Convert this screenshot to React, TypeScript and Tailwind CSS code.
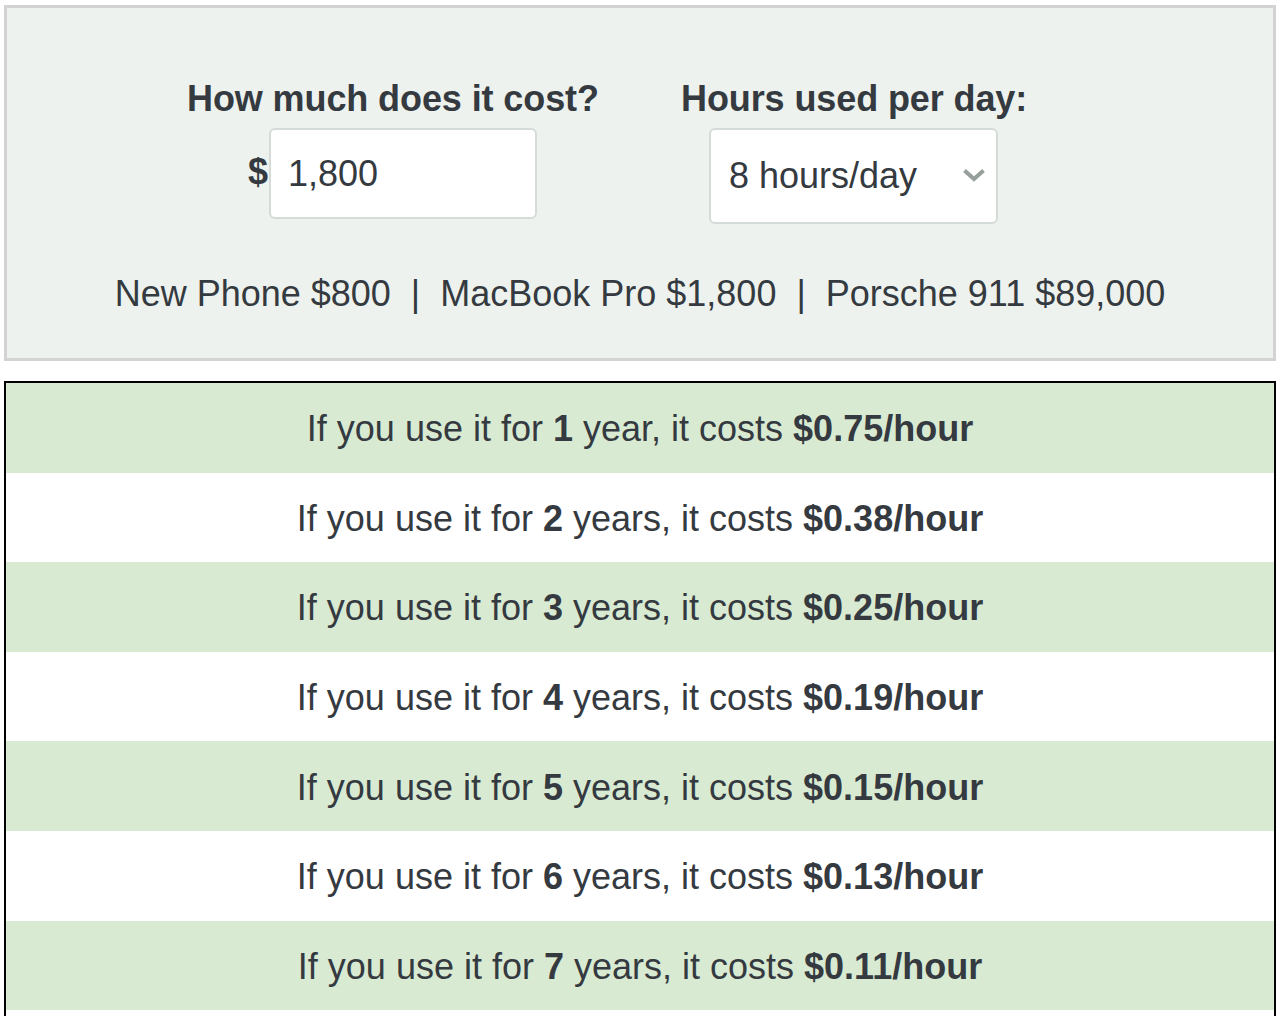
import React from "react";

const rows = [
  { n: 1, unit: "year", cost: "$0.75" },
  { n: 2, unit: "years", cost: "$0.38" },
  { n: 3, unit: "years", cost: "$0.25" },
  { n: 4, unit: "years", cost: "$0.19" },
  { n: 5, unit: "years", cost: "$0.15" },
  { n: 6, unit: "years", cost: "$0.13" },
  { n: 7, unit: "years", cost: "$0.11" },
  { n: 8, unit: "years", cost: "$0.09" },
];

export default function App() {
  return (
    <div className="min-h-screen bg-white font-['Liberation_Sans',Arial,Helvetica,sans-serif] text-[#343a40]">
      <div className="pt-[5px] pl-[4px] w-[1276px]">
        <div className="border-[3px] border-[#d3d3d3] bg-[#edf2ee] pt-[70px] pb-[44px]">
          <div className="flex items-start pl-[180px]">
            <div className="flex flex-col items-start w-[494px]">
              <label className="text-[36px] leading-[41px] font-bold tracking-[-0.1px]">How much does it cost?</label>
              <div className="mt-[9px] ml-[61px] flex items-center">
                <span className="text-[36px] leading-[41px] font-bold -mt-[4px]">$</span>
                <input
                  defaultValue="1,800"
                  className="ml-[1px] w-[268px] h-[91px] rounded-[6px] border-2 border-[#d5dcd8] bg-white pl-[17px] text-[36px] text-[#343a40] outline-none"
                />
              </div>
            </div>
            <div className="flex flex-col items-start">
              <label className="text-[36px] leading-[41px] font-bold tracking-[-0.1px]">Hours used per day:</label>
              <div className="relative mt-[9px] ml-[28px] w-[289px] h-[96px]">
                <select
                  defaultValue="8"
                  className="appearance-none w-full h-full rounded-[6px] border-2 border-[#d5dcd8] bg-white pl-[18px] text-[36px] text-[#343a40] outline-none"
                >
                  {Array.from({ length: 24 }, (_, i) => i + 1).map((h) => (
                    <option key={h} value={String(h)}>
                      {h} {h === 1 ? "hour" : "hours"}/day
                    </option>
                  ))}
                </select>
                <svg
                  className="pointer-events-none absolute right-[12px] top-[40px]"
                  width="24"
                  height="14"
                  viewBox="0 0 24 14"
                  fill="none"
                >
                  <path d="M2.5 2.5 L12 11 L21.5 2.5" stroke="#979f9a" strokeWidth="4" strokeLinecap="butt" strokeLinejoin="miter" />
                </svg>
              </div>
            </div>
          </div>
          <p className="mt-[49px] text-center text-[36px] leading-[41px] whitespace-pre">
            {"New Phone $800  |  MacBook Pro $1,800  |  Porsche 911 $89,000"}
          </p>
        </div>
        <div className="mt-[20px] border-2 border-black">
          {rows.map((r, i) => (
            <div
              key={r.n}
              className={`h-[89.6px] flex items-center justify-center text-[36px] leading-[41px] pt-[2px] ${
                i % 2 === 0 ? "bg-[#d9ead3]" : "bg-white"
              }`}
            >
              <span>
                If you use it for <b className="font-bold">{r.n}</b> {r.unit}, it costs{" "}
                <b className="font-bold">{r.cost}/hour</b>
              </span>
            </div>
          ))}
        </div>
      </div>
    </div>
  );
}
